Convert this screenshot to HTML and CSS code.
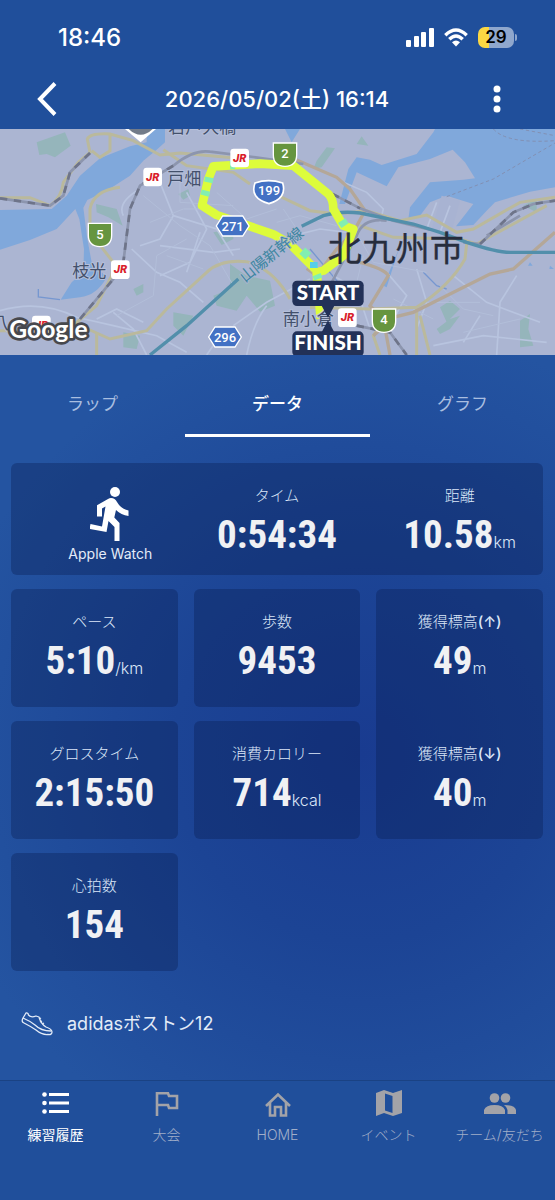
FILE: index.html
```html
<!DOCTYPE html>
<html lang="ja">
<head>
    <meta charset="UTF-8">
    <meta name="viewport" content="width=device-width, initial-scale=1.0">
    <title>練習履歴</title>
    <link rel="stylesheet" href="styles.css">
</head>
<body>
    <header>
        <div class="status-bar">
            <span class="clock">18:46</span>
            <div class="status-icons">
                <svg width="28" height="19" viewBox="0 0 28 19" fill="#fff">
                    <rect x="0" y="12" width="5" height="7" rx="1"/>
                    <rect x="8" y="8" width="5" height="11" rx="1"/>
                    <rect x="15" y="4" width="5" height="15" rx="1"/>
                    <rect x="23" y="0" width="5" height="19" rx="1"/>
                </svg>
                <svg width="24" height="19" viewBox="0 0 24 19" fill="none" stroke="#fff" stroke-width="3.4">
                    <path d="M1.3 7.2Q12-3.2 22.7 7.2M5.3 11.2Q12 4.7 18.7 11.2"/>
                    <path d="M8 14.2Q12 10.8 16 14.2L12 18.4z" fill="#fff" stroke="none"/>
                </svg>
                <div class="battery"><span>29</span></div>
            </div>
        </div>
        <div class="title-bar">
            <button class="icon-button" aria-label="戻る">
                <svg width="20" height="34" viewBox="0 0 20 34" fill="none" stroke="#fff" stroke-width="4"><path d="M18 1.500L3 17l15 15.500"/></svg>
            </button>
            <h1>2026/05/02(土) 16:14</h1>
            <button class="icon-button" aria-label="メニュー">
                <svg width="8" height="28" viewBox="0 0 8 28" fill="#fff"><circle cx="4" cy="4" r="3.500"/><circle cx="4" cy="14" r="3.500"/><circle cx="4" cy="24" r="3.500"/></svg>
            </button>
        </div>
    </header>

    <!-- 地図 -->
    <svg class="map" viewBox="0 0 1665 678" preserveAspectRatio="xMidYMid slice" role="img" aria-label="コース地図">
        <defs>
            <g id="jr">
                <rect x="-28" y="-28" width="56" height="56" rx="10" fill="#fff"/>
                <text class="jr" y="11">JR</text>
            </g>
            <path id="green" d="M-35-34H35V2Q35 35 0 36Q-35 35-35 2z" fill="#66953f" stroke="#fff" stroke-width="4"/>
            <path id="hex" d="M-30-30H30L49 0L30 30H-30L-49 0z" fill="#4371c4" stroke="#fff" stroke-width="4"/>
        </defs>
        <rect width="1665" height="678" fill="#abb5d2"/>

        <!-- 海と川 -->
        <g fill="#80a8db">
            <path d="M0 243L155 240L200 200L240 140L300 88L390 52L440 40L440 0H495V40L470 62L430 95L390 140L320 185L262 213L250 236L262 330L275 400L320 445Q290 500 240 505L182 512L215 460L250 430L252 360L238 270L226 240L170 300L90 333L0 362z"/>
            <path d="M855 0H900L875 40zM1305 0H1665V175L1590 188L1485 220L1460 245L1420 288L1368 292L1420 225L1340 200L1290 220L1260 260L1225 270L1230 235L1290 160L1390 152L1425 148L1395 100L1358 62L1290 90L1195 115L1160 172L1070 130L1035 225L1018 225L1045 120L1070 85L1110 92L1145 108L1250 75L1300 10z"/>
            <path d="M1190 380L1205 340L1150 470L1160 475zM730 455h14v45h-10zM1590 400l8 10h-14zM1650 410l12 10h-14z"/>
        </g>
        <path d="M1325 200L1290 315L1350 325L1380 215z" fill="#a8b3d2"/>
        <path d="M115 480V504L180 512M1040 490L930 360M1270 430L1310 470L1340 480" fill="none" stroke="#7697d0" stroke-width="4"/>

        <!-- 緑地 -->
        <g fill="#95b5bb">
            <path d="M110 40L195 10L212 50L165 85L140 75L118 78zM288 225L350 240L368 290L325 265L290 250zM535 195L565 180L570 200L550 212zM690 405L740 440L810 455L825 530L780 548L740 500L710 545L650 530L640 500L690 480zM520 550L580 560L550 620L520 590zM370 610L420 620L410 660L370 655zM400 480l30-15v25l-20 10zM640 310l60-10v30l-35 18z"/>
            <path d="M950 95L980 55L1005 58L965 115L940 120zM1070 45L1085 22L1105 50zM1320 535L1350 515L1380 540L1340 580zM1310 600L1350 570L1380 560L1350 600L1320 615zM1560 575L1590 555L1585 600L1600 650L1560 655zM1570 230l40-20v40z"/>
        </g>

        <!-- 細い道路 -->
        <g fill="none" stroke="#b8c4df" stroke-width="5">
            <path d="M0 545Q120 510 230 565L340 590L470 620L560 670M340 550L400 600L440 678M290 570L350 540L430 580M395 360L470 430L540 460L610 520M480 160L520 260L480 330L420 350M520 260L650 300L700 380M560 190L620 300L570 400L480 440M600 310L560 430M370 260Q350 220 420 180M700 590L800 520L930 450M740 678Q760 580 800 530M620 678L660 620M480 350L640 370L720 360"/>
            <path d="M1030 160L1100 190L1150 240L1140 280M1310 220L1280 300M1350 230L1320 310M1250 420L1280 520L1250 600L1250 678M1550 440L1500 520L1490 678M1360 440L1460 520L1620 580M1180 570L1220 500L1160 430M1000 440L1070 480L1110 600M1300 650L1450 620L1640 640M880 320L960 300L1040 310M1440 560L1390 640"/>
        </g>
        <g fill="none" stroke="#b2bed9" stroke-width="3">
            <path d="M430 200L540 290L630 350L700 470M450 280L550 240L640 240M500 380L610 420M540 150L540 220L700 230M560 330L470 380L460 500L350 560M650 190L740 270L830 240M830 280L900 260L1010 290M850 240L890 300L880 370M1080 330L1120 400L1280 430M1090 380L1070 460M1320 470L1390 540L1480 560M1180 510L1300 570M1390 610L1560 570M1280 520L1440 520"/>
        </g>

        <!-- 幹線道路 -->
        <g fill="none" stroke="#bab99c" stroke-width="9">
            <path d="M0 206H90L150 230Q185 205 190 160L235 100L270 70L262 30Q270 12 330 15L400 35L480 78L540 72L740 90M275 65L300 85L330 65V15M360 175Q280 185 270 240V310L340 400L335 440L290 530L230 580L130 605H0M230 585L330 630L440 605L500 540L620 430Q660 390 740 398M290 615V678M740 398Q820 420 870 510M490 62L560 110L700 130L750 165"/>
            <path d="M825 195L930 245L1010 255L1100 245L1200 275L1280 258L1370 310L1420 300L1560 220L1665 205M1080 290L1180 325L1380 330L1430 345L1640 230M930 535L1110 540L1250 535Q1350 470 1395 390L1400 345M1250 535V678M1260 560L1290 678M1160 560L1120 620L1140 678"/>
        </g>
        <g fill="none" stroke="#b4a798" stroke-width="10">
            <path d="M890 93L1010 145L1050 180L1095 245L1060 310L1010 360L950 440L920 418M1080 400Q1155 420 1165 440L1110 530L1150 570L1170 678M1665 310L1540 420L1470 435L1320 510L1240 550L1180 565L1120 620"/>
        </g>

        <!-- 鉄道 -->
        <g fill="none" stroke="#8c95ae" stroke-width="8">
            <path d="M0 208L150 230L190 200L210 130L270 72M240 570L340 450L370 400L390 240L420 170L520 110Q580 60 630 68L760 84L910 105M960 175L1080 238L1180 275L1290 302M990 470L1070 320Q1090 265 1160 275M1390 340L1440 345L1540 250L1600 225L1665 215M1070 590L1170 610L1220 678M1460 320L1560 260"/>
            <path d="M0 208L150 230L190 200L210 130L270 72M240 570L340 450L370 400L390 240L420 170L520 110M960 175L1080 238M1440 345L1540 250L1600 225L1665 215M1070 590L1170 610L1220 678" stroke="#6e7489" stroke-dasharray="22 20"/>
        </g>
        <g fill="none" stroke="#528fab" stroke-width="10">
            <path d="M450 678L560 590L715 450M905 292L970 260Q1020 245 1080 252L1240 285L1320 310L1400 340Q1490 370 1530 370H1665"/>
        </g>
        <path d="M1340 203L1480 150L1665 42M1480 0Q1520 45 1665 35M1560 0L1665 20" fill="none" stroke="#8290b3" stroke-width="3" stroke-dasharray="10 8"/>

        <!-- 走行ルート -->
        <g fill="none" stroke-width="26" stroke-linejoin="round">
            <path d="M962 570L950 430L970 425L1030 380L1060 300L1030 290L1000 240Q1000 210 985 195L880 110L780 104L640 112L625 150L606 230L650 258L820 316L870 345L945 420" stroke="#ddfc3b"/>
            <path d="M690 108L705 107M628 145L625 160M618 185L614 200M1025 275L1035 290M907 365L925 382M950 437L955 450" stroke="#82eeb0"/>
            <path d="M930 408L953 408" stroke="#56cfe8" stroke-width="18"/>
        </g>

        <path d="M375 0L422 40L468 0z" fill="#fff"/>
        <path d="M386 0Q422 35 458 0z" fill="#727b89"/>

        <!-- 標識 -->
        <use href="#green" x="300" y="317"/>
        <use href="#green" x="855" y="76"/>
        <use href="#green" x="1152" y="574"/>
        <use href="#hex" x="698" y="291"/>
        <use href="#hex" x="675" y="624"/>
        <path d="M765 162Q805 148 848 162Q862 208 807 224Q748 208 765 162z" fill="#4371c4" stroke="#fff" stroke-width="5"/>
        <g class="sign">
            <text x="300" y="330">5</text>
            <text x="855" y="86">2</text>
            <text x="1152" y="586">4</text>
            <text x="698" y="305">271</text>
            <text x="675" y="638">296</text>
            <text x="807" y="199">199</text>
        </g>

        <g class="place">
            <text x="505" y="12">若戸大橋</text>
            <text x="502" y="167">戸畑</text>
            <text x="217" y="445">枝光</text>
            <text x="848" y="587">南小倉</text>
            <text x="-24" y="600">八</text>
        </g>
        <text class="line-name" transform="translate(735 462) rotate(-39)">山陽新幹線</text>
        <text class="city" x="983" y="397">北九州市</text>
        <use href="#jr" x="458" y="144"/>
        <use href="#jr" x="719" y="87"/>
        <use href="#jr" x="361" y="422"/>
        <use href="#jr" x="1042" y="566"/>
        <use href="#jr" x="124" y="588"/>
        <text class="google" x="28" y="628">Google</text>

        <g fill="#223158">
            <path d="M965 530h38l-19 36zM965 610h38l-19-36z"/>
            <rect x="877" y="455" width="214" height="76" rx="14"/>
            <rect x="877" y="607" width="214" height="76" rx="14"/>
        </g>
        <g class="pin">
            <text x="984" y="514">START</text>
            <text x="984" y="664">FINISH</text>
        </g>
    </svg>

    <main>
        <div class="tabs" role="tablist">
            <button role="tab">ラップ</button>
            <button role="tab" class="active" aria-selected="true">データ</button>
            <button role="tab">グラフ</button>
        </div>

        <section class="card summary">
            <div class="device">
                <svg width="40" height="56" viewBox="0 0 40 56" fill="#fff">
                    <circle cx="25" cy="6" r="5"/>
                    <path d="M21 12Q25 12 27 16Q31 23 38.500 24.500V30Q31 29 26 24L24.300 31.500L29.500 37V55H24.500V41L18.500 35L16.500 46L-.5 43L.5 38L12 40.500L15.500 20.500L12 22.500V30.500H7V19.200L18 13Q19.500 12 21 12z"/>
                </svg>
                <span>Apple Watch</span>
            </div>
            <div class="stat">
                <h2>タイム</h2>
                <p>0:54:34</p>
            </div>
            <div class="stat">
                <h2>距離</h2>
                <p>10.58<small>km</small></p>
            </div>
        </section>

        <section class="grid">
            <div class="card stat">
                <h2>ペース</h2>
                <p>5:10<small>/km</small></p>
            </div>
            <div class="card stat">
                <h2>歩数</h2>
                <p>9453</p>
            </div>
            <div class="card elevation">
                <div class="stat">
                    <h2>獲得標高<b>(↑)</b></h2>
                    <p>49<small>m</small></p>
                </div>
                <div class="stat">
                    <h2>獲得標高<b>(↓)</b></h2>
                    <p>40<small>m</small></p>
                </div>
            </div>
            <div class="card stat">
                <h2>グロスタイム</h2>
                <p>2:15:50</p>
            </div>
            <div class="card stat">
                <h2>消費カロリー</h2>
                <p>714<small>kcal</small></p>
            </div>
            <div class="card stat">
                <h2>心拍数</h2>
                <p>154</p>
            </div>
        </section>

        <div class="shoes">
            <svg width="32" height="24" viewBox="0 0 32 24" fill="none" stroke="#e4ecf8" stroke-width="1.300" stroke-linejoin="round">
                <path d="M2 6L5 1Q7 .5 7.500 3Q10 6 15 4L18 5Q20 12 25 15Q31 17 31 20Q31 23 27 22.500Q21 23 15 18Q9 14 3 11Q0 10 2 6z"/>
                <path d="M2 6Q9 9 14 13Q20 19 30 19M18 7l2-1M19 10l2-1M21 12l2-1"/>
            </svg>
            <span>adidasボストン12</span>
        </div>
    </main>

    <nav>
        <a href="#" class="active">
            <svg width="32" height="32" viewBox="0 0 32 32" fill="#fff">
                <path d="M9 6h20v3H9zM9 14.500h20v3H9zM9 23h20v3H9z"/>
                <circle cx="4.500" cy="7.500" r="2.300"/><circle cx="4.500" cy="16" r="2.300"/><circle cx="4.500" cy="24.500" r="2.300"/>
            </svg>
            練習履歴
        </a>
        <a href="#">
            <svg width="32" height="32" viewBox="0 0 32 32" fill="none" stroke="#a3a3a8" stroke-width="2.600"><path d="M6 29V6.300H17L18 9H26V21H18L17 18H6"/></svg>
            大会
        </a>
        <a href="#">
            <svg width="32" height="32" viewBox="0 0 32 32" fill="none" stroke="#a3a3a8" stroke-width="2.600"><path d="M4 19L16 7.500L28 19M8 16V28.500H13V20H19V28.500H24V16"/></svg>
            HOME
        </a>
        <a href="#">
            <svg width="32" height="32" viewBox="0 0 32 32" fill="#a3a3a8"><path fill-rule="evenodd" d="M3 6L11 3L20 6L29 3V26L20 29L11 26L3 29zM12 6.500V23.500L19.500 26V9z"/></svg>
            イベント
        </a>
        <a href="#">
            <svg width="32" height="32" viewBox="0 0 32 32" fill="#a3a3a8">
                <circle cx="10.500" cy="11" r="4.800"/><circle cx="21.500" cy="11" r="4.800"/>
                <path d="M0 27V23Q2 18 10.500 18Q19 18 21 23V27zM20 18Q31 18 32 23V27H23.500V23Q23 20 20 18z"/>
            </svg>
            チーム/友だち
        </a>
    </nav>
</body>
</html>
```
FILE: styles.css
```css
* {
    box-sizing: border-box;
}
body {
    margin: 0;
    min-height: 100vh;
    display: flex;
    flex-direction: column;
    font-family: Inter, "Noto Sans CJK JP", sans-serif;
    color: #fff;
    background-color: #204f9b;
}
h1, h2, p {
    margin: 0;
}
button {
    border: none;
    background: none;
    color: inherit;
    font-family: inherit;
    padding: 0;
}
svg {
    display: block;
}

/* ヘッダー */
.status-bar {
    display: flex;
    justify-content: space-between;
    align-items: center;
    height: 68px;
    padding: 6px 38px 0 58px;
}
.clock {
    font-size: 24px;
    font-weight: 500;
}
.status-icons {
    display: flex;
    align-items: center;
    gap: 10px;
}
.battery {
    position: relative;
    width: 36px;
    height: 21px;
    margin-right: 3px;
    border-radius: 7px;
    background: linear-gradient(90deg, #fbd743 30%, #8fa7cd 30%);
    color: #000;
    font-size: 17px;
    font-weight: 600;
    line-height: 21px;
    text-align: center;
}
.battery::after {
    content: "";
    position: absolute;
    left: 37px;
    top: 7px;
    width: 2px;
    height: 7px;
    border-radius: 0 2px 2px 0;
    background-color: #8fa7cd;
}
.title-bar {
    display: grid;
    grid-template-columns: 20px 1fr 20px;
    align-items: center;
    height: 61px;
    padding: 0 48px 0 37px;
    text-align: center;
}
.icon-button {
    display: flex;
    justify-content: center;
}
h1 {
    padding: 0 0 4px 10px;
    font-size: 22px;
    font-weight: 500;
}

/* 地図 */
.map {
    width: 100%;
    height: 226px;
}
.map text {
    font-family: "Noto Sans CJK JP", sans-serif;
}
.place {
    font-size: 51px;
    fill: #43506b;
    stroke: #b5bfda;
    stroke-width: 6;
    paint-order: stroke;
}
.map .city {
    font-size: 102px;
    fill: #272d3d;
    stroke: #272d3d;
    stroke-width: 1;
}
.map .line-name {
    font-size: 46px;
    fill: #3f87a1;
    stroke: #abb5d2;
    stroke-width: 5;
    paint-order: stroke;
}
.map .sign text {
    font-family: Roboto, sans-serif;
    font-size: 39px;
    font-weight: 500;
    fill: #fff;
    text-anchor: middle;
}
.map .jr {
    font-family: Inter, sans-serif;
    font-size: 32px;
    font-weight: 800;
    font-style: italic;
    fill: #d91e2b;
    text-anchor: middle;
}
.map .google {
    font-family: Lato, sans-serif;
    font-size: 74px;
    font-weight: 700;
    fill: #fff;
    stroke: #47484d;
    stroke-width: 16;
    stroke-linejoin: round;
    paint-order: stroke;
}
.map .pin text {
    font-family: Lato, sans-serif;
    font-size: 62px;
    font-weight: 900;
    fill: #fff;
    text-anchor: middle;
}

/* データ */
main {
    flex: 1;
    background: radial-gradient(circle at 65% 55%, #193b90 0%, #1c4495 35%, #2454a1 80%);
}
.tabs {
    display: grid;
    grid-template-columns: repeat(3, 1fr);
    margin-bottom: 26px;
}
.tabs button {
    height: 82px;
    padding-top: 16px;
    border-bottom: 3px solid transparent;
    font-size: 17px;
    color: #a9bee0;
}
.tabs .active {
    border-color: #fff;
    color: #fff;
    font-weight: 500;
}
.card {
    border-radius: 6px;
    background-color: rgba(10, 28, 80, 0.35);
}
.summary {
    display: grid;
    grid-template-columns: repeat(3, 1fr);
    column-gap: 16px;
    height: 112px;
    margin: 0 12px 14px 11px;
}
.device {
    display: flex;
    flex-direction: column;
    align-items: center;
    gap: 4px;
    padding: 23px 0 0 32px;
    font-size: 14px;
    line-height: 16px;
    color: #e4ecf8;
}
.grid {
    display: grid;
    grid-template-columns: repeat(3, 1fr);
    grid-auto-rows: 118px;
    gap: 14px 16px;
    margin: 0 12px 0 11px;
}
.stat {
    padding-top: 22px;
    text-align: center;
}
.stat h2 {
    font-size: 15px;
    font-weight: 300;
    line-height: 22px;
    margin-bottom: 4px;
    color: #dce7f8;
}
.stat b {
    font-weight: 500;
}
.stat p {
    font-family: "Roboto Condensed", "Liberation Sans Narrow", Roboto, sans-serif;
    font-size: 39px;
    font-weight: 700;
    line-height: 48px;
    color: #f0f1f4;
}
.stat small {
    font-family: Inter, sans-serif;
    font-size: 16px;
    font-weight: 300;
    color: #dce7f8;
}
.elevation {
    grid-row: span 2;
    display: grid;
    grid-auto-rows: 118px;
    gap: 14px;
}
.shoes {
    display: flex;
    align-items: center;
    gap: 14px;
    padding: 40px 21px;
    font-size: 18px;
    line-height: 26px;
    color: #e4ecf8;
}

/* 下部メニュー */
nav {
    display: grid;
    grid-template-columns: repeat(5, 1fr);
    height: 120px;
    padding-top: 6px;
    border-top: 1px solid #1a4283;
}
nav a {
    display: flex;
    flex-direction: column;
    align-items: center;
    gap: 6px;
    font-size: 14px;
    font-weight: 300;
    line-height: 20px;
    color: #a0aec9;
    text-decoration: none;
    white-space: nowrap;
}
nav .active {
    color: #fff;
    font-weight: 400;
}
```
